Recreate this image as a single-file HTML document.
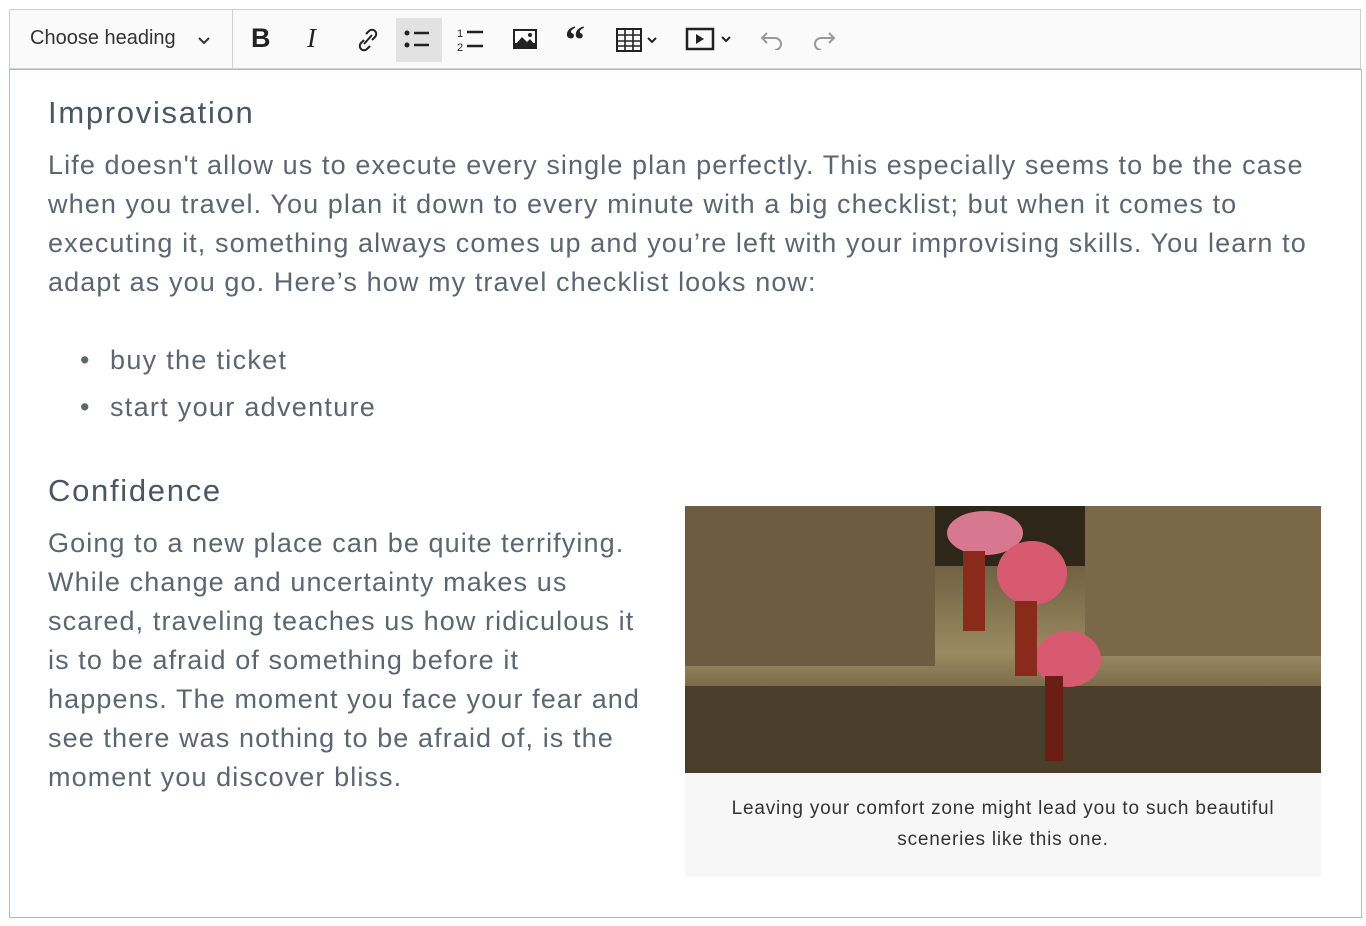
<!DOCTYPE html>
<html><head><style>
body{margin:0;width:1366px;height:926px;background:#fff;font-family:"Liberation Sans",sans-serif;position:relative;overflow:hidden}
.tb{position:absolute;left:9px;top:9px;width:1352px;height:60px;background:#fafafa;border:1px solid #d0d0d0;box-sizing:border-box}
.ed{position:absolute;left:9px;top:69px;width:1353px;height:849px;border:1px solid #9ebfe0;box-sizing:border-box;background:#fff}
h2{position:absolute;margin:0;font-weight:normal;color:#4b5563;font-size:31px;letter-spacing:1.7px}
p{margin:0;font-size:27px;line-height:39px;color:#5d6571;letter-spacing:1.1px}
</style></head><body>
<div class="tb">
<div style="position:absolute;left:20px;top:17px;font-size:20px;color:#333">Choose heading</div>
<svg style="position:absolute;left:187px;top:24px" width="14" height="14"><path d="M2 4l5 5 5-5" stroke="#333" stroke-width="2" fill="none"/></svg>
<div style="position:absolute;left:222px;top:0;width:1px;height:58px;background:#d0d0d0"></div>
<div style="position:absolute;left:241px;top:13px;font:bold 27px 'Liberation Sans';color:#222">B</div>
<div style="position:absolute;left:297px;top:13px;font:italic 27px 'Liberation Serif';color:#222">I</div>
<svg style="position:absolute;left:345px;top:16px" width="26" height="28"><path d="M9 18l8-9M11 8l3-3a4 4 0 016 6l-3 3M15 20l-3 3a4 4 0 01-6-6l3-3" stroke="#222" stroke-width="2" fill="none"/></svg>
<div style="position:absolute;left:386px;top:8px;width:46px;height:44px;background:#e2e2e2"></div>
<svg style="position:absolute;left:393px;top:18px" width="30" height="24"><circle cx="4" cy="5" r="2.5" fill="#222"/><circle cx="4" cy="17" r="2.5" fill="#222"/><path d="M11 5h15M11 17h15" stroke="#222" stroke-width="2.5"/></svg>
<svg style="position:absolute;left:446px;top:16px" width="30" height="28"><text x="1" y="11" font-size="11" fill="#222">1</text><text x="1" y="25" font-size="11" fill="#222">2</text><path d="M11 6h16M11 20h16" stroke="#222" stroke-width="2.5"/></svg>
<svg style="position:absolute;left:501px;top:17px" width="28" height="24"><rect x="2" y="2" width="24" height="20" fill="#222"/><rect x="4" y="4" width="20" height="12" fill="#fff"/><path d="M4 18l7-8 5 5 3-3 5 6z" fill="#222"/><circle cx="19" cy="8" r="2" fill="#222"/></svg>
<div style="position:absolute;left:555px;top:6px;font:bold 40px 'Liberation Serif';color:#222">“</div>
<svg style="position:absolute;left:605px;top:17px" width="46" height="26"><rect x="2" y="2" width="24" height="22" fill="none" stroke="#222" stroke-width="2"/><path d="M2 8h24M2 14h24M2 19h24M10 2v22M18 2v22" stroke="#222" stroke-width="1.6"/><path d="M33 11l4 4 4-4" stroke="#222" stroke-width="2" fill="none"/></svg>
<svg style="position:absolute;left:675px;top:17px" width="52" height="26"><rect x="2" y="2" width="26" height="20" fill="none" stroke="#222" stroke-width="2.5"/><path d="M11 7v10l8-5z" fill="#222"/><path d="M37 10l4 4 4-4" stroke="#222" stroke-width="2" fill="none"/></svg>
<svg style="position:absolute;left:748px;top:18px" width="28" height="22"><path d="M9 5L4 10l5 5M4 10h13a6 6 0 010 12" stroke="#999" stroke-width="2" fill="none"/></svg>
<svg style="position:absolute;left:800px;top:18px" width="28" height="22"><path d="M19 5l5 5-5 5M24 10H11a6 6 0 000 12" stroke="#999" stroke-width="2" fill="none"/></svg>
</div>
<div class="ed"></div>
<h2 style="left:48px;top:95px">Improvisation</h2>
<div style="position:absolute;left:48px;top:146px;width:1290px"><p>Life doesn't allow us to execute every single plan perfectly. This especially seems to be the case when you travel. You plan it down to every minute with a big checklist; but when it comes to executing it, something always comes up and you’re left with your improvising skills. You learn to adapt as you go. Here’s how my travel checklist looks now:</p></div>
<div style="position:absolute;left:80px;top:341px"><p style="letter-spacing:1.3px"><span style="display:inline-block;width:30px">•</span>buy the ticket</p></div>
<div style="position:absolute;left:80px;top:388px"><p style="letter-spacing:1.3px"><span style="display:inline-block;width:30px">•</span>start your adventure</p></div>
<h2 style="left:48px;top:473px">Confidence</h2>
<div style="position:absolute;left:48px;top:524px;width:595px"><p>Going to a new place can be quite terrifying. While change and uncertainty makes us scared, traveling teaches us how ridiculous it is to be afraid of something before it happens. The moment you face your fear and see there was nothing to be afraid of, is the moment you discover bliss.</p></div>
<div style="position:absolute;left:685px;top:506px;width:636px;height:371px;background:#f7f7f7">
<div style="position:relative;width:636px;height:267px;overflow:hidden;background:linear-gradient(180deg,#5a4a32 0%,#7a6a48 30%,#9a8a62 55%,#6a5a3c 75%,#3e3322 100%)">
<div style="position:absolute;left:0;top:0;width:250px;height:160px;background:#6e5c40"></div>
<div style="position:absolute;left:400px;top:0;width:236px;height:150px;background:#7a6848"></div>
<div style="position:absolute;left:250px;top:0;width:150px;height:60px;background:#2e2618"></div>
<div style="position:absolute;left:0;top:180px;width:636px;height:87px;background:#4a3e2a"></div>
<div style="position:absolute;left:262px;top:5px;width:76px;height:44px;border-radius:50%;background:#d87890"></div>
<div style="position:absolute;left:312px;top:35px;width:70px;height:64px;border-radius:50%;background:#d85a70"></div>
<div style="position:absolute;left:350px;top:125px;width:66px;height:56px;border-radius:50%;background:#d85a70"></div>
<div style="position:absolute;left:278px;top:45px;width:22px;height:80px;background:#8a2a1a"></div>
<div style="position:absolute;left:330px;top:95px;width:22px;height:75px;background:#8a2a1a"></div>
<div style="position:absolute;left:360px;top:170px;width:18px;height:85px;background:#6a1e14"></div>
</div>
<div style="text-align:center;font-size:19px;line-height:31px;color:#333;padding-top:20px;letter-spacing:0.8px">Leaving your comfort zone might lead you to such beautiful<br>sceneries like this one.</div>
</div>
</body></html>
